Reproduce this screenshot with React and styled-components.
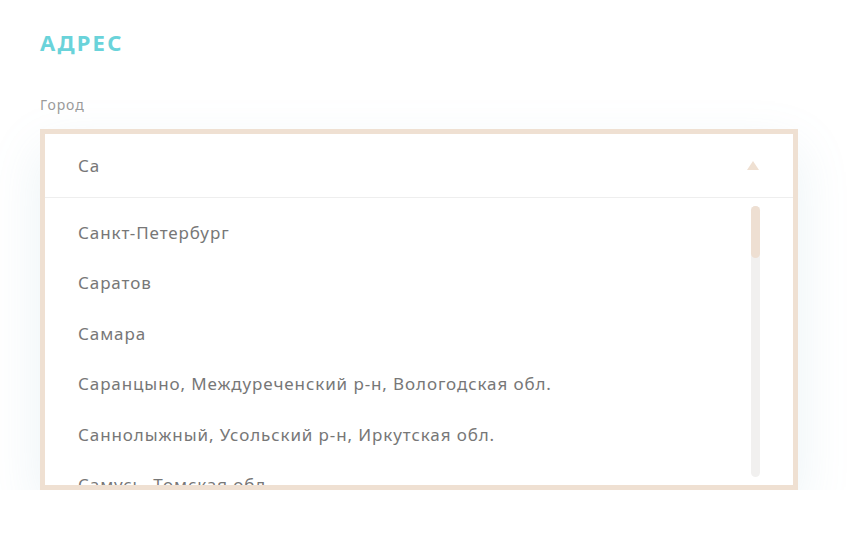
import React from "react";
import styled, { createGlobalStyle } from "styled-components";

const Global = createGlobalStyle`
  html, body { margin: 0; padding: 0; background: #fff; }
  body { font-family: "Noto Sans", "Liberation Sans", sans-serif; }
`;

const Page = styled.div`
  padding: 27px 58px 0 40px;
  width: 856px;
  box-sizing: border-box;
`;

const Title = styled.h2`
  margin: 0;
  font-family: "Noto Sans", sans-serif;
  font-weight: 700;
  font-size: 22px;
  line-height: 30px;
  letter-spacing: 2.2px;
  color: #6ad3da;
`;

const Label = styled.div`
  margin-top: 38px;
  font-size: 14px;
  line-height: 20px;
  letter-spacing: 0.9px;
  color: #9a9a9a;
`;

const Combo = styled.div`
  margin-top: 14px;
  border: 5px solid #efe0d2;
  background: #fff;
  box-shadow: 0 20px 50px rgba(110, 170, 190, 0.14);
`;

const Header = styled.div`
  height: 63px;
  display: flex;
  align-items: center;
  justify-content: space-between;
  padding: 0 34px 0 33px;
  border-bottom: 1px solid #eeeeee;
`;

const Value = styled.span`
  font-size: 17px;
  letter-spacing: 0.9px;
  color: #777;
`;

const Arrow = styled.span`
  width: 0;
  height: 0;
  border-left: 6.5px solid transparent;
  border-right: 6.5px solid transparent;
  border-bottom: 9px solid #efe0d2;
`;

const Body = styled.div`
  display: flex;
  height: 287px;
`;

const List = styled.ul`
  flex: 1;
  margin: 0;
  padding: 9px 0 0 33px;
  list-style: none;
  overflow: hidden;
`;

const Item = styled.li`
  height: 50.5px;
  display: flex;
  align-items: center;
  font-size: 17px;
  letter-spacing: 0.9px;
  color: #777;
  white-space: nowrap;
`;

const Track = styled.div`
  width: 9px;
  margin: 8px 33px 8px 0;
  border-radius: 5px;
  background: #f1f0ef;
`;

const Thumb = styled.div`
  height: 52px;
  border-radius: 5px;
  background: #eedfd2;
`;

const cities = [
  "Санкт-Петербург",
  "Саратов",
  "Самара",
  "Саранцыно, Междуреченский р-н, Вологодская обл.",
  "Саннолыжный, Усольский р-н, Иркутская обл.",
  "Самусь, Томская обл.",
];

export default function App() {
  return (
    <>
      <Global />
      <Page>
        <Title>АДРЕС</Title>
        <Label>Город</Label>
        <Combo>
          <Header>
            <Value>Са</Value>
            <Arrow />
          </Header>
          <Body>
            <List>
              {cities.map((c) => (
                <Item key={c}>{c}</Item>
              ))}
            </List>
            <Track>
              <Thumb />
            </Track>
          </Body>
        </Combo>
      </Page>
    </>
  );
}
